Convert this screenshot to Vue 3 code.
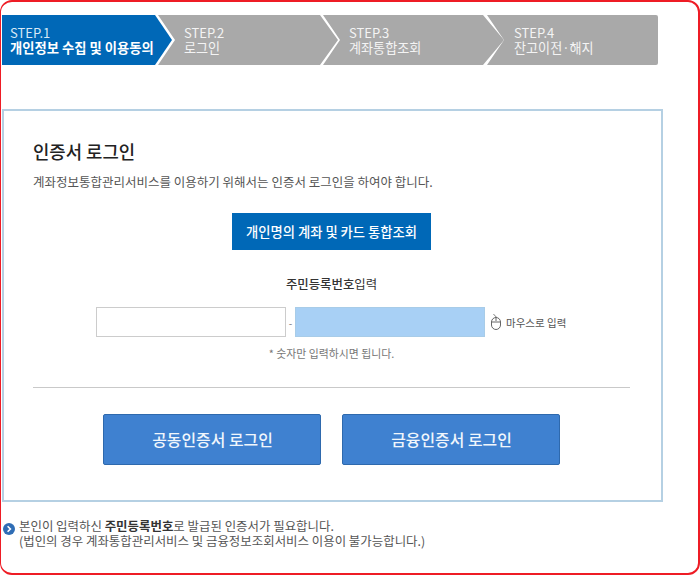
<script setup>
const steps = [
  { no: 'STEP.1', label: '개인정보 수집 및 이용동의', cls: 's1' },
  { no: 'STEP.2', label: '로그인', cls: 's2' },
  { no: 'STEP.3', label: '계좌통합조회', cls: 's3' },
  { no: 'STEP.4', label: '잔고이전·해지', cls: 's4' }
]
</script>

<template>
  <div class="frame">
    <ol class="steps">
      <li v-for="s in steps" :key="s.no" class="step" :class="s.cls">
        <span class="no">{{ s.no }}</span>
        <span class="label">{{ s.label }}</span>
      </li>
    </ol>

    <section class="panel">
      <h2 class="title">인증서 로그인</h2>
      <p class="desc">계좌정보통합관리서비스를 이용하기 위해서는 인증서 로그인을 하여야 합니다.</p>
      <button class="primary">개인명의 계좌 및 카드 통합조회</button>
      <p class="rrn-label"><b>주민등록번호</b>입력</p>
      <div class="rrn">
        <input class="field" type="text" />
        <span class="dash">-</span>
        <input class="field active" type="text" />
        <span class="mouse">
          <svg width="12" height="17" viewBox="0 0 12 17" fill="none" stroke="#666" stroke-width="1">
            <rect x="1.5" y="3.5" width="9" height="12" rx="4.5" />
            <path d="M1.5 8h9M6 3.5V7M6 3.5C6 2 5 1.5 3.5 0.5" />
          </svg>
          마우스로 입력
        </span>
      </div>
      <p class="hint">* 숫자만 입력하시면 됩니다.</p>
      <hr class="rule" />
      <div class="actions">
        <button class="login">공동인증서 로그인</button>
        <button class="login">금융인증서 로그인</button>
      </div>
    </section>

    <div class="note">
      <svg class="bullet" width="12" height="12" viewBox="0 0 12 12">
        <circle cx="6" cy="6" r="6" fill="#2f6db5" />
        <path d="M4.6 3.2 7.4 6 4.6 8.8" fill="none" stroke="#fff" stroke-width="1.6" />
      </svg>
      <p>본인이 입력하신 <b>주민등록번호</b>로 발급된 인증서가 필요합니다.<br />(법인의 경우 계좌통합관리서비스 및 금융정보조회서비스 이용이 불가능합니다.)</p>
    </div>
  </div>
</template>

<style>
html, body { margin: 0; background: #fff; }
</style>

<style scoped>
.frame {
  box-sizing: border-box;
  width: 700px;
  height: 575px;
  padding: 14px 0 0 1px;
  border: 2px solid #ee1c25;
  border-left-width: 1px;
  border-radius: 12px;
  overflow: hidden;
  background: #fff;
  font-family: "Noto Sans CJK KR", "Noto Sans", sans-serif;
  color: #444;
}
.steps {
  display: flex;
  margin: -1px 0 0;
  padding: 0;
  list-style: none;
  height: 50px;
}
.step {
  box-sizing: border-box;
  display: flex;
  flex-direction: column;
  justify-content: center;
  height: 50px;
  background: #a9a9a9;
  color: #f4f4f4;
  font-size: 13.1px;
}
.no { display: block; font-size: 13px; line-height: 15px; }
.label { display: block; line-height: 15px; white-space: nowrap; }
.s1 {
  width: 170px;
  padding-left: 8px;
  background: #0068b7;
  color: #fff;
  clip-path: polygon(0 0, 153px 0, 170px 25px, 153px 50px, 0 50px);
}
.s1 .no { color: #d8e9f6; }
.s1 .label { font-weight: 700; font-size: 13.3px; color: #fff; }
.s2 {
  width: 180px;
  margin-left: -14px;
  padding-left: 26px;
  clip-path: polygon(0 0, 162px 0, 180px 25px, 162px 50px, 0 50px, 17px 25px);
}
.s3 {
  width: 181px;
  margin-left: -15px;
  padding-left: 26px;
  clip-path: polygon(0 0, 160px 0, 181px 25px, 160px 50px, 0 50px, 17px 25px);
}
.s4 {
  width: 171px;
  margin-left: -17px;
  padding-left: 27px;
  border-radius: 0 2px 2px 0;
  clip-path: polygon(0 0, 171px 0, 171px 50px, 0 50px, 17px 25px);
}
.panel {
  box-sizing: border-box;
  width: 661px;
  height: 393px;
  margin-top: 44px;
  padding: 27px 31px 0 29px;
  border: 2px solid #b5d0e3;
  display: flex;
  flex-direction: column;
  align-items: center;
}
.title {
  align-self: flex-start;
  margin: 0;
  font-size: 17.8px;
  line-height: 26px;
  font-weight: 500;
  color: #222;
}
.desc {
  align-self: flex-start;
  margin: 9px 0 0;
  font-size: 12.5px;
  line-height: 18px;
  color: #555;
}
.primary {
  width: 199px;
  height: 37px;
  margin-top: 22px;
  border: 0;
  background: #0068b7;
  color: #fff;
  font: 500 13.3px "Noto Sans CJK KR", sans-serif;
  padding: 0;
}
.rrn-label {
  margin: 25px 0 0;
  font-size: 12.4px;
  line-height: 18px;
  color: #333;
}
.rrn-label b { font-weight: 500; }
.rrn {
  width: 100%;
  margin-top: 14px;
  padding-left: 63px;
  box-sizing: border-box;
  display: flex;
  align-items: center;
  height: 30px;
}
.field {
  box-sizing: border-box;
  flex: none;
  width: 190px;
  height: 30px;
  border: 1px solid #ccc;
  background: #fff;
  padding: 0;
  outline: 0;
}
.field.active { background: #a8d0f5; border-color: #a8cce8; }
.dash {
  width: 9px;
  text-align: center;
  font-size: 10px;
  color: #777;
}
.mouse {
  display: flex;
  align-items: center;
  gap: 4px;
  margin-left: 5px;
  font-size: 10.5px;
  color: #555;
  white-space: nowrap;
}
.hint {
  margin: 8px 0 0;
  font-size: 10.9px;
  line-height: 16px;
  color: #777;
}
.rule {
  width: 597px;
  margin: 26px 0 0;
  border: 0;
  border-top: 1px solid #c9c9c9;
}
.actions {
  display: flex;
  gap: 21px;
  margin-top: 26px;
  margin-left: -1px;
}
.login {
  box-sizing: border-box;
  width: 218px;
  height: 51px;
  padding: 0 0 0 2px;
  border: 1px solid #2e69ad;
  border-radius: 2px;
  background: #3f81d0;
  color: #f0f6fc;
  font: 500 15.9px "Noto Sans CJK KR", sans-serif;
}
.note {
  display: flex;
  align-items: flex-start;
  gap: 4px;
  margin-top: 17px;
  padding-left: 1px;
  font-size: 12.45px;
  line-height: 15px;
  color: #555;
}
.bullet { margin-top: 4px; flex: none; }
.note p { margin: 0; }
.note b { font-weight: 700; color: #333; }
</style>
